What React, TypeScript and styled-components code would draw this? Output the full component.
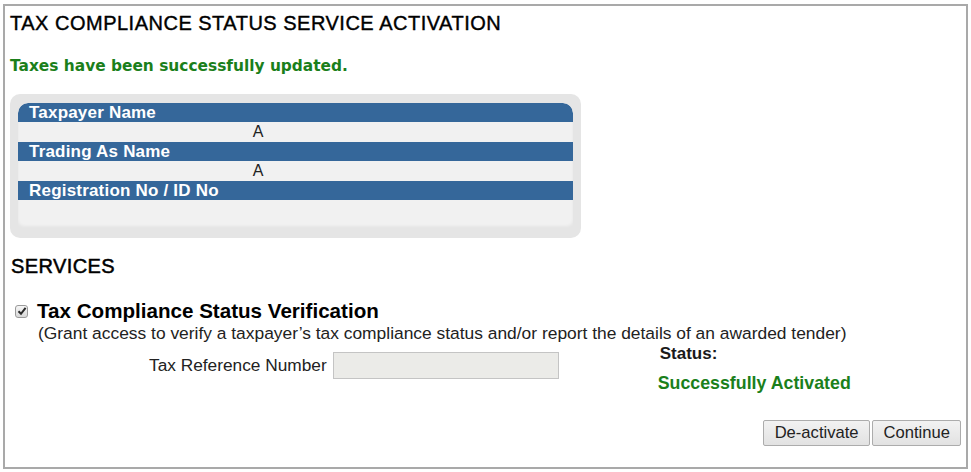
import styled, { createGlobalStyle } from 'styled-components';

const GlobalStyle = createGlobalStyle`
  html, body {
    margin: 0;
    padding: 0;
    background: #ffffff;
  }
  body {
    font-family: 'Liberation Sans', Arial, sans-serif;
    color: #000;
  }
`;

const Frame = styled.div`
  box-sizing: border-box;
  margin: 4px 0 0 3px;
  width: 965px;
  height: 465px;
  border: 2px solid #a9a9a9;
  padding: 5px 5px 0 5px;
  display: flex;
  flex-direction: column;
`;

const PageTitle = styled.h1`
  margin: 0;
  font-size: 20px;
  font-weight: normal;
  letter-spacing: 0.5px;
  line-height: 24px;
  -webkit-text-stroke: 0.4px #000;
`;

const Message = styled.p`
  margin: 21px 0 0 0;
  font-family: 'DejaVu Sans', Verdana, sans-serif;
  font-size: 15.4px;
  font-weight: bold;
  color: #1b7f1b;
  line-height: 20px;
`;

const DetailsPanel = styled.div`
  margin-top: 18px;
  width: 571px;
  box-sizing: border-box;
  background: #e5e5e5;
  border-radius: 10px;
  padding: 9px 8px;
`;

const DetailsInner = styled.div`
  background: #f1f1f1;
  border-radius: 10px 10px 6px 6px;
  box-shadow: inset 0 -3px 3px rgba(0, 0, 0, 0.05);
  overflow: hidden;
  padding-bottom: 29px;
`;

const FieldHeader = styled.div<{ $first?: boolean }>`
  background: #35679a;
  color: #fff;
  font-weight: bold;
  font-size: 17px;
  letter-spacing: 0.2px;
  line-height: 19px;
  height: 19px;
  padding-left: 11px;
  border-radius: ${(p) => (p.$first ? '10px 10px 0 0' : '0')};
`;

const FieldValue = styled.div`
  width: 480px;
  text-align: center;
  font-size: 16px;
  line-height: 20px;
  height: 20px;
  color: #222;
`;

const SectionTitle = styled.h2`
  margin: 16px 0 0 1px;
  font-size: 20px;
  font-weight: normal;
  letter-spacing: 0.4px;
  line-height: 24px;
  -webkit-text-stroke: 0.5px #000;
`;

const ServiceRow = styled.label`
  margin-top: 21px;
  display: flex;
  align-items: center;
  gap: 9px;
  padding-left: 5px;
`;

const Check = styled.span`
  width: 13px;
  height: 13px;
  box-sizing: border-box;
  border: 1px solid #9a9a9a;
  border-radius: 3px;
  background: linear-gradient(#f6f6f6, #d8d8d8);
  display: flex;
  align-items: center;
  justify-content: center;
`;

const ServiceName = styled.span`
  font-size: 20.6px;
  font-weight: bold;
  line-height: 24px;
`;

const ServiceNote = styled.div`
  margin-left: 28px;
  font-size: 17.4px;
  line-height: 20px;
  color: #222;
`;

const ServiceBody = styled.div`
  margin-top: 1px;
  display: flex;
  align-items: flex-start;
`;

const RefField = styled.div`
  display: flex;
  align-items: center;
  gap: 6px;
  margin-left: 139px;
  margin-top: 8px;
  font-size: 17.3px;
  color: #222;
`;

const RefInput = styled.input`
  width: 226px;
  height: 27px;
  box-sizing: border-box;
  border: 1px solid #c4c4c4;
  background: #ebebe8;
  margin: 0;
`;

const StatusBlock = styled.div`
  margin-left: 99px;
  font-weight: bold;
  line-height: 20px;
`;

const StatusLabel = styled.div`
  padding-left: 2px;
  font-size: 17px;
  color: #1a1a1a;
`;

const StatusValue = styled.div`
  margin-top: 9px;
  color: #1b7f1b;
  font-size: 17.8px;
`;

const Actions = styled.div`
  margin-top: auto;
  margin-bottom: 21px;
  display: flex;
  justify-content: flex-end;
  gap: 2px;
`;

const Button = styled.button`
  height: 26px;
  box-sizing: border-box;
  padding: 0 10px 0 11px;
  font-family: 'Liberation Sans', Arial, sans-serif;
  font-size: 16.6px;
  color: #222;
  border: 1px solid #acacac;
  border-radius: 2px;
  background: linear-gradient(#f2f2f2, #e2e2e2);
`;

export default function App() {
  return (
    <>
      <GlobalStyle />
      <Frame>
        <PageTitle>TAX COMPLIANCE STATUS SERVICE ACTIVATION</PageTitle>
        <Message>Taxes have been successfully updated.</Message>
        <DetailsPanel>
          <DetailsInner>
            <FieldHeader $first>Taxpayer Name</FieldHeader>
            <FieldValue>A</FieldValue>
            <FieldHeader>Trading As Name</FieldHeader>
            <FieldValue>A</FieldValue>
            <FieldHeader>Registration No / ID No</FieldHeader>
          </DetailsInner>
        </DetailsPanel>
        <SectionTitle>SERVICES</SectionTitle>
        <ServiceRow>
          <Check>
            <svg width="10" height="10" viewBox="0 0 10 10">
              <path d="M1.5 5.2 L4 7.8 L8.6 1.8" fill="none" stroke="#2a2a2a" strokeWidth="2" />
            </svg>
          </Check>
          <ServiceName>Tax Compliance Status Verification</ServiceName>
        </ServiceRow>
        <ServiceNote>
          (Grant access to verify a taxpayer’s tax compliance status and/or report the details of an awarded tender)
        </ServiceNote>
        <ServiceBody>
          <RefField>
            Tax Reference Number
            <RefInput disabled />
          </RefField>
          <StatusBlock>
            <StatusLabel>Status:</StatusLabel>
            <StatusValue>Successfully Activated</StatusValue>
          </StatusBlock>
        </ServiceBody>
        <Actions>
          <Button>De-activate</Button>
          <Button>Continue</Button>
        </Actions>
      </Frame>
    </>
  );
}
